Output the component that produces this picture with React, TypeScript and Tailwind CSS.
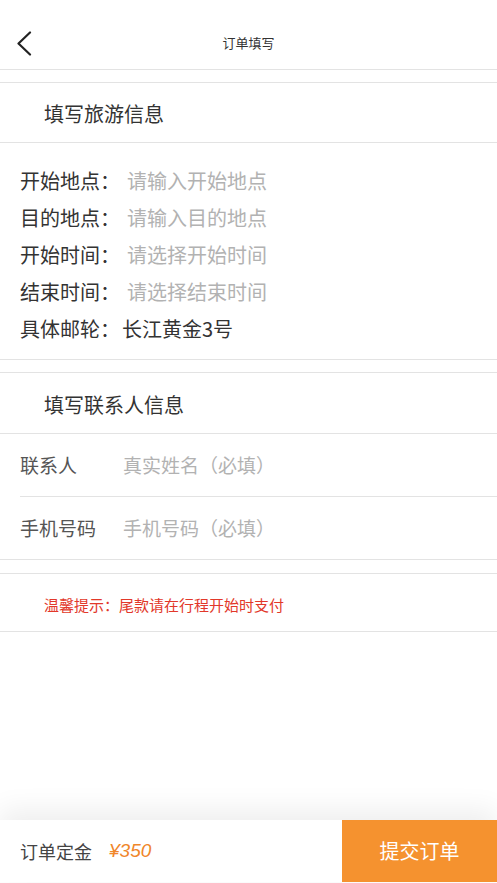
import React from "react";

const font = { fontFamily: '"Noto Sans CJK SC", "Noto Sans", sans-serif' };

function Row({ label, value, placeholder, ml }: { label: string; value: string; placeholder?: boolean; ml: string }) {
  return (
    <div className="flex items-center h-[37px] text-[20px] text-[#333]">
      <span>{label}</span>
      <span className={`${ml} ${placeholder ? "text-[#b2b2b2]" : "text-[#333]"}`}>{value}</span>
    </div>
  );
}

export default function App() {
  return (
    <div className="min-h-screen h-[883px] flex flex-col bg-white" style={font}>
      <div className="flex-1 flex flex-col">
        {/* Header */}
        <div className="relative h-[70px] border-b border-[#e3e3e3] flex items-center justify-center">
          <svg className="absolute left-[16px] top-[31px]" width="16" height="25" viewBox="0 0 16 25" fill="none">
            <path d="M14 1.5 L2.5 12.5 L14 23.5" stroke="#222" strokeWidth="2.2" strokeLinecap="round" strokeLinejoin="round" />
          </svg>
          <span className="text-[13px] text-[#333] mt-[16px]">订单填写</span>
        </div>

        {/* Section 1 */}
        <div className="mt-[12px] border-t border-b border-[#e3e3e3]">
          <div className="h-[60px] border-b border-[#e3e3e3] flex items-center pl-[44px] pt-[3px] text-[20px] text-[#333]">
            填写旅游信息
          </div>
          <div className="pl-[20px] pt-[19px] pb-[12px]">
            <Row label="开始地点：" value="请输入开始地点" placeholder ml="ml-[7px]" />
            <Row label="目的地点：" value="请输入目的地点" placeholder ml="ml-[7px]" />
            <Row label="开始时间：" value="请选择开始时间" placeholder ml="ml-[7px]" />
            <Row label="结束时间：" value="请选择结束时间" placeholder ml="ml-[7px]" />
            <Row label="具体邮轮：" value="长江黄金3号" ml="ml-[2px]" />
          </div>
        </div>

        {/* Section 2 */}
        <div className="mt-[12px] border-t border-b border-[#e3e3e3]">
          <div className="h-[61px] border-b border-[#e3e3e3] flex items-center pl-[44px] pt-[4px] text-[20px] text-[#333]">
            填写联系人信息
          </div>
          <div className="pl-[20px]">
            <div className="h-[63px] flex items-center border-b border-[#e3e3e3] text-[19px]">
              <span className="w-[103px] text-[#555]">联系人</span>
              <span className="text-[#b2b2b2]">真实姓名（必填）</span>
            </div>
            <div className="h-[62px] flex items-center text-[19px]">
              <span className="w-[103px] text-[#555]">手机号码</span>
              <span className="text-[#b2b2b2]">手机号码（必填）</span>
            </div>
          </div>
        </div>

        {/* Tip */}
        <div className="mt-[13px] border-t border-b border-[#e3e3e3] h-[59px] flex items-center pl-[44px] pt-[6px] text-[15px] text-[#e2382a]">
          温馨提示：尾款请在行程开始时支付
        </div>
      </div>

      {/* Bottom bar */}
      <div className="h-[62px] flex bg-white shadow-[0_-10px_28px_rgba(0,0,0,0.07)] mb-[1px]">
        <div className="flex-1 flex items-center pl-[20px]">
          <span className="text-[18px] text-[#444]">订单定金</span>
          <span className="ml-[17px] text-[19px] italic text-[#f0862a]" style={{ fontFamily: '"Liberation Sans", "Noto Sans CJK SC", sans-serif' }}>¥350</span>
        </div>
        <button className="w-[155px] h-full bg-[#f5922f] text-white text-[20px] flex items-center justify-center">
          提交订单
        </button>
      </div>
    </div>
  );
}
